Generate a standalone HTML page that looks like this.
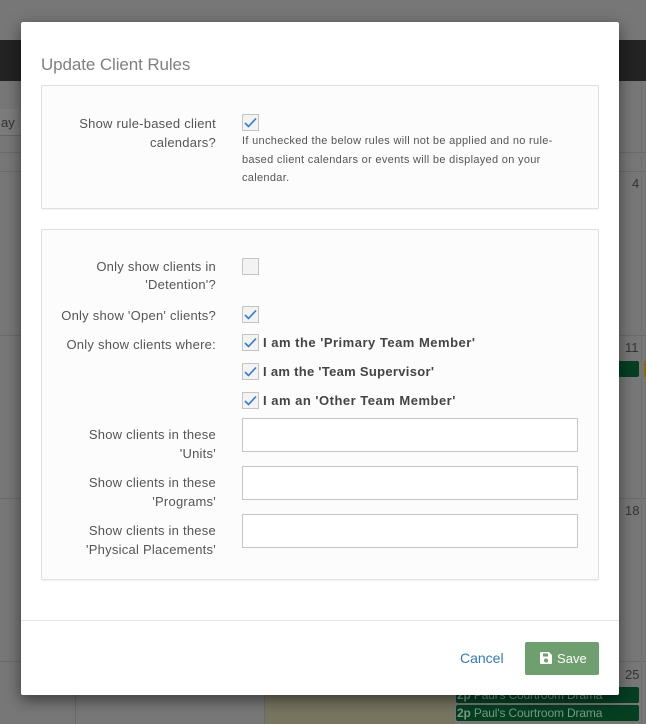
<!DOCTYPE html>
<html>
<head>
<meta charset="utf-8">
<style>
html,body{margin:0;padding:0;width:646px;height:724px;overflow:hidden;background:#777;font-family:"Liberation Sans",sans-serif;}
.a{position:absolute;}
.bl{position:absolute;background:#6a6a6a;}
.lb{position:absolute;left:42px;width:174px;text-align:right;font-size:13px;line-height:19px;color:#555;letter-spacing:.24px;}
.cb{position:absolute;left:242px;width:15px;height:15px;border:1px solid #c4c4c4;background:#f3f3f3;}
.cb svg{position:absolute;left:1px;top:2px;}
.bt{position:absolute;left:263px;font-size:13px;line-height:18px;font-weight:bold;color:#444;letter-spacing:.5px;white-space:nowrap;}
.inp{position:absolute;left:242px;width:334px;height:32px;border:1px solid #c6c6c6;background:#fff;}
.panel{position:absolute;left:41px;width:556px;background:#fcfcfc;border:1px solid #e0e0e0;box-shadow:0 1px 1px rgba(0,0,0,.05);border-radius:2px;}
.help{position:absolute;left:242px;width:320px;font-size:11px;line-height:18.5px;color:#555;letter-spacing:.31px;white-space:nowrap;}
.ev{position:absolute;left:456px;width:183px;height:16px;background:#043f22;border-radius:2px;color:#7b9a87;font-size:12px;line-height:16px;letter-spacing:-.15px;white-space:nowrap;overflow:hidden;}
</style>
</head>
<body>
<div class="a" style="left:0;top:40px;width:646px;height:41px;background:#232323;"></div>
<div class="bl" style="left:0;top:171px;width:646px;height:1px;"></div>
<div class="bl" style="left:0;top:152px;width:646px;height:1px;"></div>
<div class="bl" style="left:0;top:335px;width:646px;height:1px;"></div>
<div class="bl" style="left:0;top:498px;width:646px;height:1px;"></div>
<div class="bl" style="left:0;top:661px;width:646px;height:1px;"></div>
<div class="bl" style="left:75px;top:695px;width:1px;height:29px;"></div>
<div class="bl" style="left:264px;top:695px;width:1px;height:29px;"></div>
<div class="a" style="left:641px;top:81px;width:1px;height:643px;background:#707070;"></div>
<div class="a" style="left:265px;top:695px;width:190px;height:29px;background:#77745f;"></div>
<div class="a" style="left:0;top:109px;width:21px;height:26px;border-bottom:1px solid #666;background:#7c7c7c;"></div>
<div class="a" style="left:1px;top:114px;font-size:13px;line-height:18px;color:#333;">ay</div>
<div class="a" style="left:632px;top:175px;font-size:13px;line-height:18px;color:#333;">4</div>
<div class="a" style="left:625px;top:339px;font-size:13px;line-height:18px;color:#333;">11</div>
<div class="a" style="left:625px;top:502px;font-size:13px;line-height:18px;color:#333;">18</div>
<div class="a" style="left:625px;top:666px;font-size:13px;line-height:18px;color:#333;">25</div>
<div class="a" style="left:600px;top:361px;width:39px;height:16px;background:#043f22;border-radius:2px;"></div>
<div class="a" style="left:644px;top:361px;width:2px;height:16px;background:#8d6210;"></div>
<div class="ev" style="top:687px;"><b style="margin-left:1px;">2p</b> Paul's Courtroom Drama</div>
<div class="ev" style="top:705px;"><b style="margin-left:1px;">2p</b> Paul's Courtroom Drama</div>

<div class="a" style="left:21px;top:22px;width:598px;height:673px;background:#fff;border-radius:2px;box-shadow:0 5px 15px rgba(0,0,0,.5);"></div>

<div class="a" style="left:41px;top:54px;font-size:17px;line-height:22px;color:#808080;letter-spacing:-.1px;white-space:nowrap;">Update Client Rules</div>

<div class="panel" style="top:85px;height:122px;"></div>
<div class="panel" style="top:229px;height:349px;"></div>

<div class="lb" style="top:114px;">Show rule-based client<br>calendars?</div>
<div class="cb" style="top:114px;"><svg width="13" height="11" viewBox="0 0 13 11"><path d="M1 6l3.5 3.5L12 1.5" fill="none" stroke="#2f7ad8" stroke-width="1.6"/></svg></div>
<div class="help" style="top:132px;">If unchecked the below rules will not be applied and no rule-<br>based client calendars or events will be displayed on your<br>calendar.</div>

<div class="lb" style="top:258px;line-height:18px;">Only show clients in<br>'Detention'?</div>
<div class="cb" style="top:258px;"></div>
<div class="lb" style="top:306px;">Only show 'Open' clients?</div>
<div class="cb" style="top:306px;"><svg width="13" height="11" viewBox="0 0 13 11"><path d="M1 6l3.5 3.5L12 1.5" fill="none" stroke="#2f7ad8" stroke-width="1.6"/></svg></div>
<div class="lb" style="top:335px;">Only show clients where:</div>
<div class="cb" style="top:334px;"><svg width="13" height="11" viewBox="0 0 13 11"><path d="M1 6l3.5 3.5L12 1.5" fill="none" stroke="#2f7ad8" stroke-width="1.6"/></svg></div>
<div class="bt" style="top:334px;">I am the 'Primary Team Member'</div>
<div class="cb" style="top:363px;"><svg width="13" height="11" viewBox="0 0 13 11"><path d="M1 6l3.5 3.5L12 1.5" fill="none" stroke="#2f7ad8" stroke-width="1.6"/></svg></div>
<div class="bt" style="top:363px;letter-spacing:.3px;">I am the 'Team Supervisor'</div>
<div class="cb" style="top:392px;"><svg width="13" height="11" viewBox="0 0 13 11"><path d="M1 6l3.5 3.5L12 1.5" fill="none" stroke="#2f7ad8" stroke-width="1.6"/></svg></div>
<div class="bt" style="top:392px;">I am an 'Other Team Member'</div>

<div class="lb" style="top:425px;">Show clients in these<br>'Units'</div>
<div class="inp" style="top:418px;"></div>
<div class="lb" style="top:473px;">Show clients in these<br>'Programs'</div>
<div class="inp" style="top:466px;"></div>
<div class="lb" style="top:521px;">Show clients in these<br>'Physical Placements'</div>
<div class="inp" style="top:514px;"></div>

<div class="a" style="left:21px;top:620px;width:598px;height:1px;background:#e5e5e5;"></div>
<div class="a" style="left:460px;top:648px;font-size:14px;line-height:20px;color:#337ab7;letter-spacing:0;">Cancel</div>
<div class="a" style="left:525px;top:642px;width:74px;height:33px;background:#6f9f6f;border-radius:2px;"></div>
<svg class="a" style="left:540px;top:652px;" width="12" height="12" viewBox="0 0 12 12"><path fill-rule="evenodd" d="M1 0h8l3 3v8a1 1 0 0 1-1 1H1a1 1 0 0 1-1-1V1a1 1 0 0 1 1-1zM3 1.5v3h5v-3zM6 6.5a2 2 0 1 0 0 4 2 2 0 0 0 0-4z" fill="#fff"/></svg>
<div class="a" style="left:557px;top:649px;font-size:13px;line-height:19px;color:#fff;letter-spacing:.05px;">Save</div>
</body>
</html>
